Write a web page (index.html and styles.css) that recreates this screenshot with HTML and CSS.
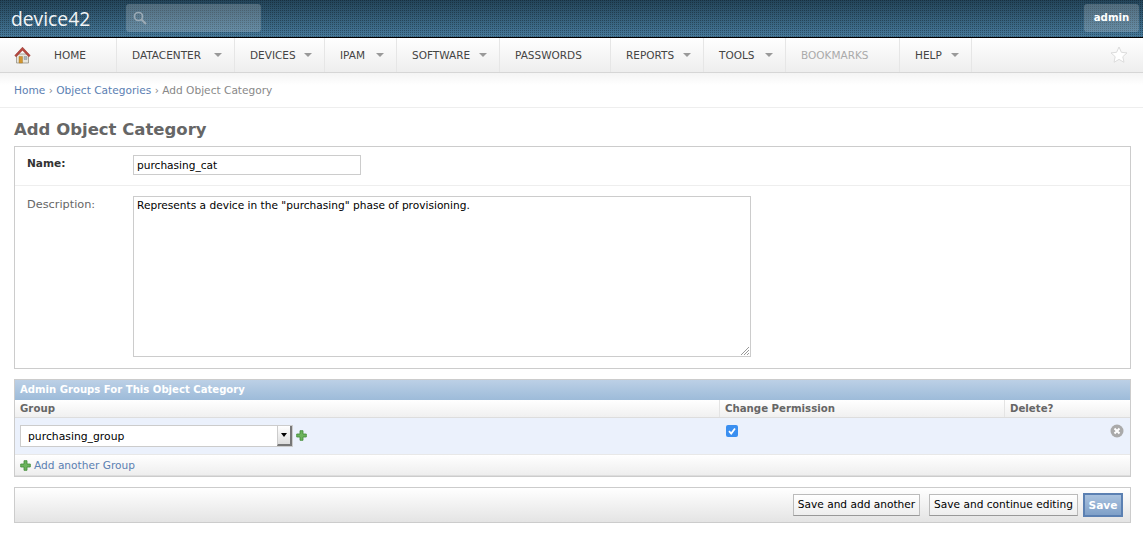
FILE: index.html
```html
<!DOCTYPE html>
<html lang="en">
<head>
<meta charset="utf-8">
<title>Add Object Category</title>
<link rel="stylesheet" href="styles.css">
</head>
<body>
<header class="topbar">
  <div class="logo">device42</div>
  <div class="search">
    <svg class="search-icon" width="14" height="14" viewBox="0 0 14 14"><circle cx="5.500" cy="5.500" r="4" fill="none" stroke="#9aa9b4" stroke-width="1.700"/><path d="M8.500 8.500L13 13" stroke="#9aa9b4" stroke-width="2.200"/></svg>
  </div>
  <div class="user">admin</div>
</header>
<nav class="nav">
  <div class="home">
    <svg width="17" height="18" viewBox="0 0 17 18"><path d="M2.500 8h12v9h-12z" fill="#e8e6de" stroke="#8a8578" stroke-width=".7"/><path d="M5 10.500h3.500V17H5z" fill="#d3962f" stroke="#a06f20" stroke-width=".4"/><path d="M10 10.500h3v3h-3z" fill="#a9b6bf" stroke="#7d8890" stroke-width=".4"/><path d="M.8 9.500L8.500 1.200l7.700 8.300-1.400 1.200L8.500 4.200 2.200 10.700z" fill="#b8483f" stroke="#92322b" stroke-width=".6" stroke-linejoin="round"/></svg>
  </div>
  <div class="item w-home">HOME</div>
  <div class="item w-dc caret">DATACENTER</div>
  <div class="item w-dev caret">DEVICES</div>
  <div class="item w-ipam caret">IPAM</div>
  <div class="item w-sw caret">SOFTWARE</div>
  <div class="item w-pw">PASSWORDS</div>
  <div class="item w-rep caret">REPORTS</div>
  <div class="item w-tools caret">TOOLS</div>
  <div class="item w-book muted">BOOKMARKS</div>
  <div class="item w-help caret">HELP</div>
  <svg class="star" width="18" height="17" viewBox="0 0 18 17"><path d="M9 1l2.400 5.300 5.600.6-4.200 3.800 1.200 5.600L9 13.400l-5 2.900 1.200-5.600L1 6.900l5.600-.6z" fill="#fff" stroke="#dcdcdc"/></svg>
</nav>
<div class="crumbs"><a>Home</a> › <a>Object Categories</a> › Add Object Category</div>
<main class="content">
  <h1>Add Object Category</h1>
  <section class="box fields">
    <div class="row row-name">
      <label class="lbl strong">Name:</label>
      <div class="input">purchasing_cat</div>
    </div>
    <div class="row row-desc">
      <label class="lbl desc">Description:</label>
      <div class="textarea">Represents a device in the "purchasing" phase of provisioning.
        <svg class="grip" width="10" height="10" viewBox="0 0 10 10"><path d="M9 1L1 9M9 4L4 9M9 7L7 9" stroke="#999" stroke-width="1"/></svg>
      </div>
    </div>
  </section>
  <section class="box inline">
    <h2>Admin Groups For This Object Category</h2>
    <div class="grid head">
      <div class="cell">Group</div>
      <div class="cell">Change Permission</div>
      <div class="cell">Delete?</div>
    </div>
    <div class="grid data">
      <div class="cell group">
        <div class="select"><span class="sel-text">purchasing_group</span><span class="sel-btn"><i></i></span></div>
        <svg class="plus" width="11" height="11" viewBox="0 0 11 11"><path d="M4 .7h3v3.300h3.300v3H7v3.300H4V7H.7V4H4z" fill="#6cb35c" stroke="#3f8a35" stroke-width=".8" stroke-linejoin="round"/></svg>
      </div>
      <div class="cell"><span class="check"><svg width="12" height="12" viewBox="0 0 12 12"><path d="M3 6.200l2.200 2.300L9 3.500" fill="none" stroke="#fff" stroke-width="1.800"/></svg></span></div>
      <div class="cell del"><svg width="14" height="14" viewBox="0 0 14 14"><circle cx="7" cy="7" r="6.500" fill="#aaa"/><path d="M4.500 4.500l5 5M9.500 4.500l-5 5" stroke="#fff" stroke-width="2"/></svg></div>
    </div>
    <div class="add-row">
      <svg width="11" height="11" viewBox="0 0 11 11"><path d="M4 .7h3v3.300h3.300v3H7v3.300H4V7H.7V4H4z" fill="#6cb35c" stroke="#3f8a35" stroke-width=".8" stroke-linejoin="round"/></svg>
      <a>Add another Group</a>
    </div>
  </section>
  <section class="box actions">
    <button class="btn">Save and add another</button>
    <button class="btn">Save and continue editing</button>
    <button class="btn primary">Save</button>
  </section>
</main>
</body>
</html>
```
FILE: styles.css
```css
* { box-sizing: border-box; }
html, body { margin: 0; padding: 0; background: #fff; }
body { width: 1143px; height: 544px; overflow: hidden; font-family: "DejaVu Sans", sans-serif; font-size: 10.600px; color: #333; }

.topbar { height: 38px; display: flex; align-items: center; padding: 0 14px 0 11px; border-bottom: 1px solid #000;
  background-color: #2f5874;
  background-image: radial-gradient(circle at 0.5px 0.5px, rgba(0,0,0,.3) 0.7px, transparent 0.71px), linear-gradient(#234459, #46799a);
  background-size: 2px 2px, 100% 100%; }
.logo { width: 115px; font-family: "Open Sans", sans-serif; font-size: 19.300px; color: #f2f5f7; }
.search { width: 135px; height: 28px; border-radius: 3px; background: rgba(255,255,255,.2); padding: 7px 0 0 7px; margin-top: -1px; }
.search-icon { display: block; }
.user { margin-left: auto; width: 55px; height: 28px; margin-right: -10px; margin-top: -1px; border-radius: 3px; background: rgba(255,255,255,.2); color: #fff; font-weight: bold; font-size: 10.200px; text-align: center; line-height: 27px; }

.nav { height: 35px; display: flex; align-items: stretch; border-bottom: 1px solid #d6d6d6; background: linear-gradient(#fff, #eeeeee); font-size: 10.500px; color: #444; position: relative; }
.home { width: 39px; padding: 8px 0 0 14px; }
.item { display: flex; align-items: center; padding-left: 15px; border-right: 1px solid #e6e6e6; position: relative; }
.caret::after { content: ""; position: absolute; right: 12px; top: 15px; border: 4px solid transparent; border-top: 4px solid #999; border-bottom: 0; }
.muted { color: #aaa; }
.w-home { width: 78px; }
.w-dc { width: 118px; }
.w-dev { width: 90px; }
.w-ipam { width: 72px; }
.w-sw { width: 103px; }
.w-pw { width: 111px; }
.w-rep { width: 93px; }
.w-tools { width: 82px; }
.w-book { width: 114px; }
.w-help { width: 72px; }
.star { position: absolute; right: 15px; top: 8px; }

.crumbs { height: 35px; padding: 10px 14px 0; border-bottom: 1px solid #eee; color: #888; background: linear-gradient(#f4f4f4, #fff 12px); line-height: 14px; }
.crumbs a, .add-row a { color: #5b80b2; }

.content { padding: 0 12px 0 14px; }
h1 { margin: 0; height: 38px; padding-top: 12px; font-size: 16.500px; line-height: 20px; color: #666; font-weight: bold; }
.box { border: 1px solid #ccc; }

.fields { height: 223px; }
.row { display: flex; padding-left: 12px; }
.row-name { height: 39px; padding-top: 8px; border-bottom: 1px solid #eee; }
.row-desc { padding-top: 10px; }
.lbl { width: 106px; color: #666; line-height: 16px; }
.desc { font-size: 11.300px; padding-top: 1px; }
.strong { font-weight: bold; color: #333; }
.input { width: 228px; height: 20px; border: 1px solid #ccc; padding-left: 3px; line-height: 18px; color: #000; }
.textarea { width: 618px; height: 161px; border: 1px solid #ccc; padding: 1px 3px; line-height: 14px; color: #000; position: relative; }
.grip { position: absolute; right: 0; bottom: 0; }

.inline { margin-top: 10px; height: 98px; }
h2 { margin: 0; height: 20px; padding: 3px 5px 0; font-size: 10.100px; line-height: 14px; color: #fff; font-weight: bold; background: linear-gradient(#bcd0e6, #9dbbd9); }
.grid { display: grid; grid-template-columns: 705px 285px 1fr; }
.head { height: 18px; border-bottom: 1px solid #ddd; background: linear-gradient(#fff, #f0f0f0); font-weight: bold; color: #666; font-size: 10.200px; line-height: 17px; }
.head .cell { padding-left: 5px; border-right: 1px solid #e4e4e4; }
.head .cell:last-child { border-right: 0; }
.data { height: 37px; background: #ebf1fc; border-bottom: 1px solid #e8e8e8; }
.data .cell { padding-left: 5px; }
.data .cell:nth-child(2) { padding-left: 6px; }
.group { display: flex; align-items: center; gap: 3px; padding-bottom: 1px; }
.select { width: 273px; height: 22px; border: 1px solid #ccc; background: #fff; display: flex; font-size: 10.800px; color: #000; }
.sel-text { flex: 1; padding-left: 7px; line-height: 21px; }
.sel-btn { width: 15px; background: linear-gradient(#fff, #ddd); border-right: 2px solid #777; border-bottom: 2px solid #777; border-left: 1px solid #ccc; position: relative; }
.sel-btn i { position: absolute; left: 3px; top: 7px; border: 3.500px solid transparent; border-top: 4px solid #000; border-bottom: 0; }
.check { display: block; width: 12px; height: 12px; margin-top: 7px; border-radius: 2px; background: #3a8ff0; }
.check svg { display: block; }
.del { text-align: right; padding-right: 6px; padding-top: 6px; }
.add-row { height: 21px; display: flex; align-items: center; gap: 3px; padding-left: 5px; background: linear-gradient(#fff, #eee); border-bottom: 1px solid #ddd; }

.actions { margin-top: 10px; height: 36px; display: flex; justify-content: flex-end; align-items: center; gap: 9px; padding-right: 7px; background: linear-gradient(#fff, #e4e4e4); }
.btn { height: 22px; padding: 0 0 2px; white-space: nowrap; border: 1px solid #bbb; border-bottom-color: #999; background: linear-gradient(#fff, #eee); font-family: "DejaVu Sans", sans-serif; font-size: 10.600px; color: #000; }
.btn:nth-child(1) { width: 127px; }
.btn:nth-child(2) { width: 149px; }
.primary { width: 40px; height: 24px; margin-left: -4px; padding: 0; border: 2px solid #5b80b2; background: linear-gradient(#a8c1de, #7fa0c8); color: #fff; font-weight: bold; }
```
